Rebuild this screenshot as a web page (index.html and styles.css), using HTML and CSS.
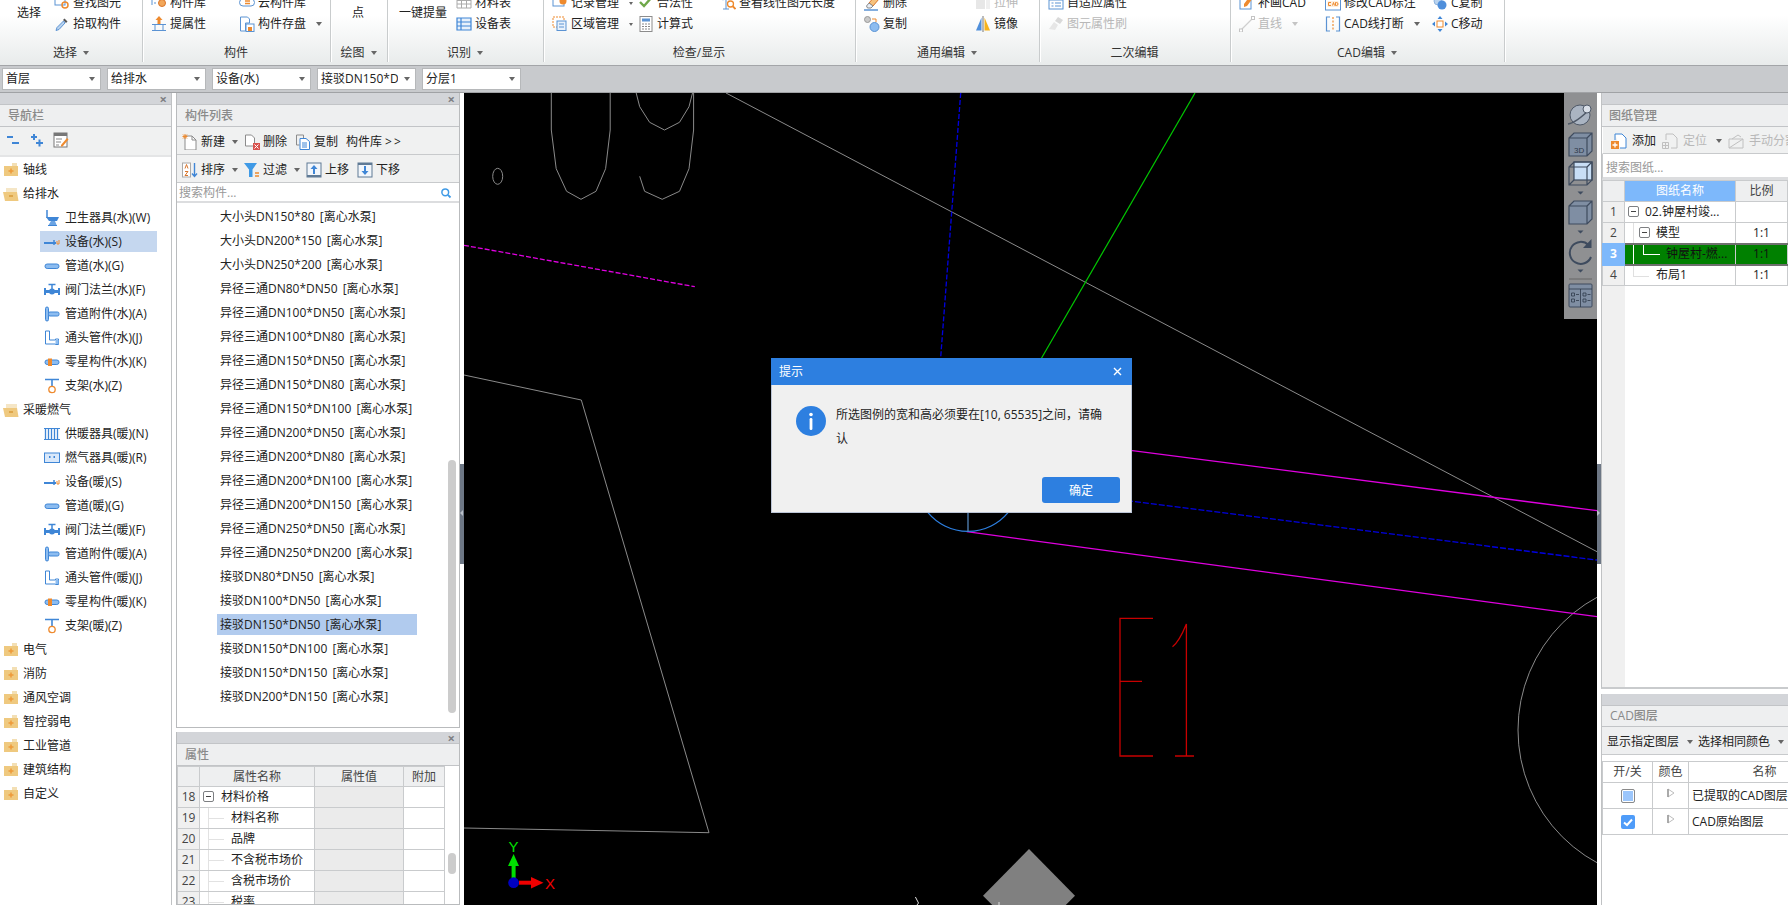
FILE: index.html
```html
<!DOCTYPE html>
<html lang="zh-CN">
<head>
<meta charset="utf-8">
<title>图纸管理</title>
<link rel="stylesheet" href="styles.css">
</head>
<body>
<svg class="defs" aria-hidden="true">
  <symbol id="t-closed" viewBox="0 0 16 16"><path d="M9 1h5v3H9z" fill="#f3dfb4"/><rect x="1" y="4" width="14" height="10" fill="#efc97f"/><path d="M8 6.5v5M5.5 9h5" stroke="#ee9a3a" stroke-width="1.5"/></symbol>
  <symbol id="t-open" viewBox="0 0 16 16"><path d="M3 2h11v11H3z" fill="#f5e6c6"/><path d="M0 6h14l1.500 9H2z" fill="#efc97f"/><path d="M6 10h4" stroke="#d99a3a" stroke-width="1.500"/></symbol>
  <symbol id="t-toilet" viewBox="0 0 16 16"><path d="M3 0v8" stroke="#3f86d6" stroke-width="1.500"/><path d="M2 7h13l-2 4H5z" fill="#3f86d6"/><path d="M4 16h9l-2-5H7z" fill="#6ba4e3"/><path d="M4 15.500h9" stroke="#3f86d6"/></symbol>
  <symbol id="t-device" viewBox="0 0 16 16"><path d="M0 9h12" stroke="#3f86d6" stroke-width="2"/><path d="M10 6v5" stroke="#3f86d6" stroke-width="1.500"/><path d="M13 7v3h2V6" stroke="#ee8a2e" fill="none"/></symbol>
  <symbol id="t-pipe" viewBox="0 0 16 16"><rect x="1" y="6" width="14" height="4.500" rx="2.200" fill="#8cbcf0" stroke="#3f86d6"/></symbol>
  <symbol id="t-valve" viewBox="0 0 16 16"><path d="M1 6v7M15 6v7" stroke="#3f86d6" stroke-width="2"/><path d="M1 9.500h14" stroke="#3f86d6" stroke-width="3"/><circle cx="8" cy="9.500" r="3" fill="#3f86d6"/><path d="M8 2v5M4.500 2.500h7" stroke="#3f86d6" stroke-width="1.500"/></symbol>
  <symbol id="t-fit" viewBox="0 0 16 16"><rect x="1.500" y="1" width="3" height="14" rx="1.500" fill="#8cbcf0" stroke="#3f86d6"/><rect x="4.500" y="6" width="10.500" height="4" rx="1.500" fill="#8cbcf0" stroke="#3f86d6"/></symbol>
  <symbol id="t-elbow" viewBox="0 0 16 16"><path d="M1.500 1h4v9h6v-1h3v5.500h-3V14h-10z" fill="#fff" stroke="#3f86d6"/><rect x="11.500" y="10" width="3" height="4" fill="#8cbcf0"/></symbol>
  <symbol id="t-misc" viewBox="0 0 16 16"><rect x="1" y="6" width="14" height="4.500" rx="2.200" fill="#8cbcf0" stroke="#3f86d6"/><rect x="4" y="4.500" width="4" height="7.500" fill="#ee8a2e"/></symbol>
  <symbol id="t-support" viewBox="0 0 16 16"><path d="M1 1.500h14M8 1.500v7" stroke="#3f86d6" stroke-width="1.600"/><circle cx="8" cy="11.500" r="3.200" fill="#fff" stroke="#ee8a2e" stroke-width="1.300"/></symbol>
  <symbol id="t-rad" viewBox="0 0 16 16"><path d="M1.500 2v12M4.500 2v12M7.500 2v12M10.500 2v12M13.500 2v12" stroke="#3f86d6" stroke-width="1.300"/><path d="M0 2.500h16M0 13.500h16" stroke="#3f86d6"/></symbol>
  <symbol id="t-gas" viewBox="0 0 16 16"><rect x=".5" y="3" width="15" height="9.500" fill="#d9e8fa" stroke="#3f86d6"/><path d="M5 6h1.500v2H5zM9.500 6H11v2H9.500z" fill="#3f86d6"/></symbol>

  <symbol id="r-find" viewBox="0 0 16 16"><rect x="1" y="1" width="10" height="9" fill="#fff" stroke="#5b93d3"/><circle cx="11" cy="10" r="3" fill="none" stroke="#ee8a2e" stroke-width="1.500"/></symbol>
  <symbol id="r-pick" viewBox="0 0 16 16"><path d="M10.500 2.500l3 3-1.500 1.500-3-3z" fill="#555"/><path d="M9.500 5L3 11.500 2 14.500l3-1L11 7z" fill="#b9d3ef" stroke="#5b93d3"/></symbol>
  <symbol id="r-lib" viewBox="0 0 16 16"><path d="M1 2v8M3 4h2M3 8h2" stroke="#5b93d3" fill="none"/><circle cx="11" cy="8" r="3.500" fill="#f2a75a" stroke="#d9752a"/></symbol>
  <symbol id="r-prop" viewBox="0 0 16 16"><path d="M8 0l3.500 4H9.500v5h-3V4H4.500z" fill="#ee8a2e"/><path d="M1 8.500h14M1 14.500h14M4 8.500v6M12 8.500v6" stroke="#5b93d3" fill="none"/></symbol>
  <symbol id="r-cloud" viewBox="0 0 16 16"><path d="M4 11a3.500 3.500 0 0 1 0-7h8a3.500 3.500 0 0 1 0 7z" fill="#fff" stroke="#5b93d3"/><path d="M6 6h5M6 8.500h5" stroke="#ee8a2e" stroke-width="1.500"/></symbol>
  <symbol id="r-save" viewBox="0 0 16 16"><path d="M1.500 1h7l2 2v4h-4v8h-5z" fill="#fff" stroke="#5b93d3"/><rect x="7" y="8" width="8" height="7.500" fill="#fff" stroke="#5b93d3"/><rect x="9" y="11" width="4" height="4" fill="#ee8a2e"/></symbol>
  <symbol id="r-mat" viewBox="0 0 16 16"><path d="M1 2h14v11H1zM1 5.500h14M1 9h14M5.500 2v11M10.500 2v11" fill="#fff" stroke="#aaa"/></symbol>
  <symbol id="r-equip" viewBox="0 0 16 16"><path d="M1 2h14v12H1zM1 6h14M1 10h14M5 2v12" fill="#e8f1fb" stroke="#3f86d6" stroke-width="1.200"/></symbol>
  <symbol id="r-rec" viewBox="0 0 16 16"><rect x="1" y="1" width="11" height="10" fill="#fff" stroke="#5b93d3"/><circle cx="11" cy="6" r="3.500" fill="#ee8a2e"/></symbol>
  <symbol id="r-area" viewBox="0 0 16 16"><rect x="1" y="1" width="11" height="10" fill="#fff" stroke="#ee8a2e" stroke-dasharray="2 1"/><rect x="5" y="5" width="9" height="9.500" fill="#e8f1fb" stroke="#5b93d3"/><path d="M7 8h5M7 11h5" stroke="#5b93d3"/></symbol>
  <symbol id="r-ok" viewBox="0 0 16 16"><path d="M2 7l4 4 8-9" fill="none" stroke="#6fa84a" stroke-width="2.400"/></symbol>
  <symbol id="r-calc" viewBox="0 0 16 16"><rect x="2" y="0.500" width="12" height="15" fill="#fff" stroke="#8c8c8c"/><rect x="4" y="2.500" width="8" height="3" fill="#5b93d3"/><path d="M4 8h2M7 8h2M10 8h2M4 10.500h2M7 10.500h2M10 10.500h2M4 13h2M7 13h2M10 13h2" stroke="#888"/></symbol>
  <symbol id="r-len" viewBox="0 0 16 16"><circle cx="3" cy="3" r="1.800" fill="none" stroke="#5b93d3"/><circle cx="9" cy="3" r="1.800" fill="none" stroke="#5b93d3"/><path d="M6 4v10M3 14h6" stroke="#5b93d3"/><circle cx="10.500" cy="9" r="3" fill="#fff" stroke="#ee8a2e" stroke-width="1.300"/><path d="M12.500 11l3 3" stroke="#ee8a2e" stroke-width="1.800"/></symbol>
  <symbol id="r-erase" viewBox="0 0 16 16"><path d="M11 1l4 3-6 7-4-3z" fill="#f5c27e" stroke="#d9752a"/><path d="M5 8l4 3-2 2H3.500L2.500 11z" fill="#e8eef6" stroke="#888"/><path d="M0 15h14" stroke="#5b93d3" stroke-width="1.500"/></symbol>
  <symbol id="r-dup" viewBox="0 0 16 16"><circle cx="3.500" cy="3.500" r="3" fill="#c9c9c9" stroke="#999"/><circle cx="10.500" cy="11" r="4.500" fill="#8cbcf0" stroke="#5b93d3"/><path d="M8 3h4v3" fill="none" stroke="#ee8a2e"/></symbol>
  <symbol id="r-stretch" viewBox="0 0 16 16"><path d="M1 14V5l5-4h4v13z" fill="#e7e7e7"/><path d="M11 4h4v10h-4z" fill="#efefef"/></symbol>
  <symbol id="r-mirror" viewBox="0 0 16 16"><path d="M6.500 1.500v13H1z" fill="#4f8fdb"/><path d="M8 0v16" stroke="#777"/><path d="M9.500 1.500v13H15z" fill="#f7b31c"/></symbol>
  <symbol id="r-adapt" viewBox="0 0 16 16"><rect x="1" y="2" width="14" height="12" fill="#fff" stroke="#5b93d3"/><path d="M1 5h14M3.500 8h2M7 8h6M3.500 11h2M7 11h6" stroke="#5b93d3"/></symbol>
  <symbol id="r-brush" viewBox="0 0 16 16"><path d="M10 1l5 3-3 4-5-3z" fill="#d9d9d9"/><path d="M6 6l4 3-3 5-6-1z" fill="#e6e6e6"/></symbol>
  <symbol id="r-fill" viewBox="0 0 16 16"><rect x="1" y="3" width="11" height="11" fill="#fff" stroke="#5b93d3"/><path d="M5 9l6-8 3 2-6 8-3 1z" fill="#ee8a2e"/></symbol>
  <symbol id="r-line" viewBox="0 0 16 16"><path d="M2 14L14 2" stroke="#cfcfcf" stroke-width="1.300"/><rect x="0.500" y="13" width="3" height="3" fill="#fff" stroke="#c4c4c4"/><rect x="12.500" y="0.500" width="3" height="3" fill="#fff" stroke="#c4c4c4"/></symbol>
  <symbol id="r-mark" viewBox="0 0 16 16"><rect x=".5" y="1" width="15" height="14" fill="#fff" stroke="#5b93d3"/><path d="M2.500 6h11v6h-11z" fill="#fdeedd"/><path d="M6 7.500H3.500v3H6M7.500 10.500l1-3 1 3M10.500 7.500v3h1a1.500 1.500 0 0 0 0-3z" fill="none" stroke="#ee8a2e"/></symbol>
  <symbol id="r-break" viewBox="0 0 16 16"><path d="M5 1H1.500v14H5M11 1h3.500v14H11" fill="none" stroke="#5b93d3" stroke-width="1.200"/><path d="M8 1v14" stroke="#ee8a2e" stroke-dasharray="2 1.500" stroke-width="1.200"/></symbol>
  <symbol id="r-ccopy" viewBox="0 0 16 16"><circle cx="6" cy="6" r="4" fill="#b9d3ef" stroke="#8fb4de"/><circle cx="10" cy="10" r="4.500" fill="#4f8fdb"/></symbol>
  <symbol id="r-move" viewBox="0 0 16 16"><path d="M8 0l2.500 3h-5zM8 16l-2.500-3h5zM0 8l3-2.500v5zM16 8l-3 2.500v-5z" fill="#3f86d6"/><rect x="5" y="5" width="6" height="6" fill="#fff" stroke="#ee8a2e"/></symbol>

  <symbol id="b-minus" viewBox="0 0 16 16"><path d="M2 5h6M7 11h7" stroke="#3f86d6" stroke-width="2"/></symbol>
  <symbol id="b-plus" viewBox="0 0 16 16"><path d="M2 5h6M5 2v6M7 11h7M10.500 7.500v7" stroke="#3f86d6" stroke-width="2"/></symbol>
  <symbol id="b-edit" viewBox="0 0 16 16"><rect x="1" y="1" width="13" height="14" fill="#fff" stroke="#777"/><rect x="1" y="1" width="13" height="3" fill="#777"/><path d="M3 7h6M3 10h5M3 13h3" stroke="#888"/><path d="M8 13l6-7 1.500 1.500-6 7H8z" fill="#ee8a2e"/></symbol>
  <symbol id="b-new" viewBox="0 0 16 16"><path d="M3 2h7l4 4v10H3z" fill="#fff" stroke="#8c8c8c"/><path d="M10 2v4h4" fill="none" stroke="#8c8c8c"/><path d="M3 0v5M.5 2.500h5M1 .5l4 4M5 .5l-4 4" stroke="#ee8a2e"/></symbol>
  <symbol id="b-del" viewBox="0 0 16 16"><path d="M1.500 1h6l3 3v8h-9z" fill="#fff" stroke="#8c8c8c"/><rect x="9" y="9" width="7" height="7" fill="#d9534f"/><path d="M10.500 10.500l4 4M14.500 10.500l-4 4" stroke="#fff"/></symbol>
  <symbol id="b-copy" viewBox="0 0 16 16"><path d="M1.500 1h7v3M1.500 1v10h3" fill="none" stroke="#8c8c8c"/><path d="M5 4.500h6l3.500 3v8H5z" fill="#fff" stroke="#3f86d6"/><path d="M7 9h5M7 11h5M7 13h5" stroke="#3f86d6"/></symbol>
  <symbol id="b-sort" viewBox="0 0 16 16"><rect x=".5" y="1" width="8" height="14" fill="#fff" stroke="#aaa"/><path d="M3 6.500l1.500-4 1.500 4M3 9.500h3l-3 4h3" fill="none" stroke="#d9752a"/><path d="M12.500 1v13M10 11.500l2.500 3 2.500-3" fill="none" stroke="#3f86d6" stroke-width="1.400"/></symbol>
  <symbol id="b-filter" viewBox="0 0 16 16"><path d="M0 1h13L8.500 7.500V15H5V7.500z" fill="#3f9ae6"/><path d="M11 11h4M11 14h4" stroke="#ee8a2e" stroke-width="1.300"/></symbol>
  <symbol id="b-up" viewBox="0 0 16 16"><rect x="1" y="1" width="14" height="14" fill="#f2f6fb" stroke="#5f7a95"/><rect x="1" y="13" width="14" height="2" fill="#5f7a95"/><path d="M8 3L4.500 7H7v5h2V7h2.500z" fill="#3f86d6"/></symbol>
  <symbol id="b-down" viewBox="0 0 16 16"><rect x="1" y="1" width="14" height="14" fill="#f2f6fb" stroke="#5f7a95"/><rect x="1" y="1" width="14" height="2" fill="#5f7a95"/><path d="M8 13l3.500-4H9V4H7v5H4.500z" fill="#3f86d6"/></symbol>
  <symbol id="b-search" viewBox="0 0 16 16"><circle cx="7" cy="7" r="4.500" fill="none" stroke="#3f9ae6" stroke-width="2"/><path d="M10.500 10.500L14 14" stroke="#3f9ae6" stroke-width="2.400"/></symbol>
  <symbol id="b-add" viewBox="0 0 16 16"><path d="M4 1h7l4 4v10h-6" fill="#fff" stroke="#3f86d6"/><path d="M4 1v6" stroke="#3f86d6"/><rect x="0" y="8" width="8" height="8" fill="#ee8a2e"/><path d="M4 9.500v5M1.500 12h5" stroke="#fff" stroke-width="1.300"/></symbol>
  <symbol id="b-loc" viewBox="0 0 16 16"><path d="M4 1h7l4 4v10h-6M4 1v6" fill="none" stroke="#c0c0c0"/><path d="M.5 9.500h6v6h-6zM3.500 9.500v6M.5 12.500h6" fill="none" stroke="#c0c0c0"/></symbol>
  <symbol id="b-split" viewBox="0 0 16 16"><path d="M1 15V6h14v9zM1 15l14-9M4 6l6-4 3 2" fill="none" stroke="#c0c0c0"/></symbol>
  <symbol id="b-tri" viewBox="0 0 8 10"><path d="M1 1l6 4-6 4z" fill="#fff" stroke="#bdbdbd"/><path d="M1 1v8" stroke="#999" stroke-width="1.500"/></symbol>
</svg>

<header class="ribbon">
  <section class="group g-select">
    <div class="gbody">
      <div class="big">选择</div>
      <div class="col">
        <div class="tool"><svg class="ic"><use href="#r-find"/></svg>查找图元</div>
        <div class="tool"><svg class="ic"><use href="#r-pick"/></svg>拾取构件</div>
      </div>
    </div>
    <div class="glabel">选择<i class="caret"></i></div>
  </section>
  <section class="group g-comp">
    <div class="gbody">
      <div class="col w88">
        <div class="tool"><svg class="ic"><use href="#r-lib"/></svg>构件库</div>
        <div class="tool"><svg class="ic"><use href="#r-prop"/></svg>提属性</div>
      </div>
      <div class="col">
        <div class="tool"><svg class="ic"><use href="#r-cloud"/></svg>云构件库</div>
        <div class="tool"><svg class="ic"><use href="#r-save"/></svg>构件存盘<i class="caret"></i></div>
      </div>
    </div>
    <div class="glabel">构件</div>
  </section>
  <section class="group g-draw">
    <div class="gbody"><div class="big">点</div></div>
    <div class="glabel">绘图<i class="caret"></i></div>
  </section>
  <section class="group g-id">
    <div class="gbody">
      <div class="big w57">一键提量</div>
      <div class="col">
        <div class="tool"><svg class="ic"><use href="#r-mat"/></svg>材料表</div>
        <div class="tool"><svg class="ic"><use href="#r-equip"/></svg>设备表</div>
      </div>
    </div>
    <div class="glabel">识别<i class="caret"></i></div>
  </section>
  <section class="group g-check">
    <div class="gbody">
      <div class="col w86">
        <div class="tool"><svg class="ic"><use href="#r-rec"/></svg>记录管理<i class="caret small"></i></div>
        <div class="tool"><svg class="ic"><use href="#r-area"/></svg>区域管理<i class="caret small"></i></div>
      </div>
      <div class="col w82">
        <div class="tool"><svg class="ic"><use href="#r-ok"/></svg>合法性</div>
        <div class="tool"><svg class="ic"><use href="#r-calc"/></svg>计算式</div>
      </div>
      <div class="col">
        <div class="tool"><svg class="ic"><use href="#r-len"/></svg>查看线性图元长度</div>
      </div>
    </div>
    <div class="glabel">检查/显示</div>
  </section>
  <section class="group g-edit">
    <div class="gbody">
      <div class="col w111">
        <div class="tool"><svg class="ic"><use href="#r-erase"/></svg>删除</div>
        <div class="tool"><svg class="ic"><use href="#r-dup"/></svg>复制</div>
      </div>
      <div class="col">
        <div class="tool off"><svg class="ic"><use href="#r-stretch"/></svg>拉伸</div>
        <div class="tool"><svg class="ic"><use href="#r-mirror"/></svg>镜像</div>
      </div>
    </div>
    <div class="glabel">通用编辑<i class="caret"></i></div>
  </section>
  <section class="group g-second">
    <div class="gbody">
      <div class="col">
        <div class="tool"><svg class="ic"><use href="#r-adapt"/></svg>自适应属性</div>
        <div class="tool off"><svg class="ic"><use href="#r-brush"/></svg>图元属性刷</div>
      </div>
    </div>
    <div class="glabel">二次编辑</div>
  </section>
  <section class="group g-cad">
    <div class="gbody">
      <div class="col w86">
        <div class="tool"><svg class="ic"><use href="#r-fill"/></svg>补画CAD</div>
        <div class="tool off"><svg class="ic"><use href="#r-line"/></svg>直线<i class="caret faint"></i></div>
      </div>
      <div class="col w107">
        <div class="tool"><svg class="ic"><use href="#r-mark"/></svg>修改CAD标注</div>
        <div class="tool"><svg class="ic"><use href="#r-break"/></svg>CAD线打断<i class="caret"></i></div>
      </div>
      <div class="col">
        <div class="tool"><svg class="ic"><use href="#r-ccopy"/></svg>C复制</div>
        <div class="tool"><svg class="ic"><use href="#r-move"/></svg>C移动</div>
      </div>
    </div>
    <div class="glabel">CAD编辑<i class="caret"></i></div>
  </section>
</header>

<div class="floorbar">
  <div class="select"><span>首层</span><i class="caret"></i></div>
  <div class="select"><span>给排水</span><i class="caret"></i></div>
  <div class="select"><span>设备(水)</span><i class="caret"></i></div>
  <div class="select"><span>接驳DN150*DN150</span><i class="caret"></i></div>
  <div class="select"><span>分层1</span><i class="caret"></i></div>
</div>

<main class="workspace">
  <aside class="panel nav">
    <div class="strip"><b class="close">×</b></div>
    <div class="title">导航栏</div>
    <div class="navtools">
      <svg class="ic"><use href="#b-minus"/></svg>
      <svg class="ic"><use href="#b-plus"/></svg>
      <svg class="ic"><use href="#b-edit"/></svg>
    </div>
    <ul class="tree">
      <li class="top"><svg class="ic"><use href="#t-closed"/></svg>轴线</li>
      <li class="top"><svg class="ic"><use href="#t-open"/></svg>给排水</li>
      <li class="sub"><svg class="ic"><use href="#t-toilet"/></svg>卫生器具(水)(W)</li>
      <li class="sub on"><svg class="ic"><use href="#t-device"/></svg>设备(水)(S)</li>
      <li class="sub"><svg class="ic"><use href="#t-pipe"/></svg>管道(水)(G)</li>
      <li class="sub"><svg class="ic"><use href="#t-valve"/></svg>阀门法兰(水)(F)</li>
      <li class="sub"><svg class="ic"><use href="#t-fit"/></svg>管道附件(水)(A)</li>
      <li class="sub"><svg class="ic"><use href="#t-elbow"/></svg>通头管件(水)(J)</li>
      <li class="sub"><svg class="ic"><use href="#t-misc"/></svg>零星构件(水)(K)</li>
      <li class="sub"><svg class="ic"><use href="#t-support"/></svg>支架(水)(Z)</li>
      <li class="top"><svg class="ic"><use href="#t-open"/></svg>采暖燃气</li>
      <li class="sub"><svg class="ic"><use href="#t-rad"/></svg>供暖器具(暖)(N)</li>
      <li class="sub"><svg class="ic"><use href="#t-gas"/></svg>燃气器具(暖)(R)</li>
      <li class="sub"><svg class="ic"><use href="#t-device"/></svg>设备(暖)(S)</li>
      <li class="sub"><svg class="ic"><use href="#t-pipe"/></svg>管道(暖)(G)</li>
      <li class="sub"><svg class="ic"><use href="#t-valve"/></svg>阀门法兰(暖)(F)</li>
      <li class="sub"><svg class="ic"><use href="#t-fit"/></svg>管道附件(暖)(A)</li>
      <li class="sub"><svg class="ic"><use href="#t-elbow"/></svg>通头管件(暖)(J)</li>
      <li class="sub"><svg class="ic"><use href="#t-misc"/></svg>零星构件(暖)(K)</li>
      <li class="sub"><svg class="ic"><use href="#t-support"/></svg>支架(暖)(Z)</li>
      <li class="top"><svg class="ic"><use href="#t-closed"/></svg>电气</li>
      <li class="top"><svg class="ic"><use href="#t-closed"/></svg>消防</li>
      <li class="top"><svg class="ic"><use href="#t-closed"/></svg>通风空调</li>
      <li class="top"><svg class="ic"><use href="#t-closed"/></svg>智控弱电</li>
      <li class="top"><svg class="ic"><use href="#t-closed"/></svg>工业管道</li>
      <li class="top"><svg class="ic"><use href="#t-closed"/></svg>建筑结构</li>
      <li class="top"><svg class="ic"><use href="#t-closed"/></svg>自定义</li>
    </ul>
  </aside>

  <div class="midcol">
    <section class="panel list-panel">
      <div class="strip"><b class="close">×</b></div>
      <div class="title">构件列表</div>
      <div class="bar">
        <span class="btn has-menu"><svg class="ic"><use href="#b-new"/></svg>新建<i class="caret"></i></span>
        <span class="btn"><svg class="ic"><use href="#b-del"/></svg>删除</span>
        <span class="btn"><svg class="ic"><use href="#b-copy"/></svg>复制</span>
        <span class="btn">构件库<span class="gt">&gt;&gt;</span></span>
      </div>
      <div class="bar">
        <span class="btn has-menu"><svg class="ic"><use href="#b-sort"/></svg>排序<i class="caret"></i></span>
        <span class="btn has-menu"><svg class="ic"><use href="#b-filter"/></svg>过滤<i class="caret"></i></span>
        <span class="btn"><svg class="ic"><use href="#b-up"/></svg>上移</span>
        <span class="btn"><svg class="ic"><use href="#b-down"/></svg>下移</span>
      </div>
      <div class="search"><span>搜索构件...</span><svg class="ic s"><use href="#b-search"/></svg></div>
      <div class="items">
        <div class="item">大小头DN150*80 [离心水泵]</div>
        <div class="item">大小头DN200*150 [离心水泵]</div>
        <div class="item">大小头DN250*200 [离心水泵]</div>
        <div class="item">异径三通DN80*DN50 [离心水泵]</div>
        <div class="item">异径三通DN100*DN50 [离心水泵]</div>
        <div class="item">异径三通DN100*DN80 [离心水泵]</div>
        <div class="item">异径三通DN150*DN50 [离心水泵]</div>
        <div class="item">异径三通DN150*DN80 [离心水泵]</div>
        <div class="item">异径三通DN150*DN100 [离心水泵]</div>
        <div class="item">异径三通DN200*DN50 [离心水泵]</div>
        <div class="item">异径三通DN200*DN80 [离心水泵]</div>
        <div class="item">异径三通DN200*DN100 [离心水泵]</div>
        <div class="item">异径三通DN200*DN150 [离心水泵]</div>
        <div class="item">异径三通DN250*DN50 [离心水泵]</div>
        <div class="item">异径三通DN250*DN200 [离心水泵]</div>
        <div class="item">接驳DN80*DN50 [离心水泵]</div>
        <div class="item">接驳DN100*DN50 [离心水泵]</div>
        <div class="item on">接驳DN150*DN50 [离心水泵]</div>
        <div class="item">接驳DN150*DN100 [离心水泵]</div>
        <div class="item">接驳DN150*DN150 [离心水泵]</div>
        <div class="item">接驳DN200*DN150 [离心水泵]</div>
        <i class="thumb list-thumb"></i>
      </div>
    </section>
    <section class="panel prop-panel">
      <div class="strip"><b class="close">×</b></div>
      <div class="title">属性</div>
      <div class="prop-body">
        <table class="grid prop">
          <colgroup><col class="c22"><col class="c115"><col class="c89"><col class="c41"></colgroup>
          <tr class="head"><th></th><th>属性名称</th><th>属性值</th><th>附加</th></tr>
          <tr><td class="num">18</td><td class="group-name"><i class="box"></i>材料价格</td><td class="val"></td><td></td></tr>
          <tr><td class="num">19</td><td class="leaf">材料名称</td><td class="val"></td><td></td></tr>
          <tr><td class="num">20</td><td class="leaf">品牌</td><td class="val"></td><td></td></tr>
          <tr><td class="num">21</td><td class="leaf">不含税市场价</td><td class="val"></td><td></td></tr>
          <tr><td class="num">22</td><td class="leaf">含税市场价</td><td class="val"></td><td></td></tr>
          <tr><td class="num">23</td><td class="leaf">税率</td><td class="val"></td><td></td></tr>
        </table>
        <i class="thumb prop-thumb"></i>
      </div>
    </section>
  </div>

  <div class="gutter"><div class="tab"><i></i></div></div>

  <div class="canvas">
    <svg class="drawing" viewBox="464 93 1133 812" fill="none">
      <g stroke="#8a8a8a" stroke-width="1">
        <path d="M551.300 93V130L556.200 168.700 566.600 191.300 581 199.300 596 191.300 605.600 168.700 610.200 130V93"/>
        <ellipse cx="497.700" cy="176.300" rx="5" ry="8"/>
        <path d="M636.200 93L639.700 106.700 649.600 122.300 664.500 130 679.500 122.300 689 106.700 692.500 93"/>
        <path d="M693.600 93V130L689 168.700 679.500 191.300 662.200 199.300 644.600 191.300 639.700 176.300"/>
        <path d="M726 93L1597 551.700"/>
        <path d="M464 375L581.300 400 709 832.700 464 828"/>
        <circle cx="1669" cy="730" r="151"/>
      </g>
      <path d="M960.700 93L940.500 360" stroke="#0000e0" stroke-width="1.300" stroke-dasharray="5 2"/>
      <path d="M1195 93L1041 359" stroke="#00c800" stroke-width="1.200"/>
      <path d="M464 245.300L694.800 286.700" stroke="#e000e0" stroke-width="1.300" stroke-dasharray="5 2"/>
      <path d="M1000 433.500L1597 510.700" stroke="#e000e0" stroke-width="1.300"/>
      <path d="M1000 484.500L1597 560" stroke="#0000e0" stroke-width="1.300" stroke-dasharray="6 2"/>
      <path d="M966.700 531.700L1597 616.700" stroke="#e000e0" stroke-width="1.300"/>
      <path d="M928 512.700A52 52 0 0 0 1008 512.700" stroke="#2d7fe0" stroke-width="1.200"/>
      <path d="M968 505V531.700" stroke="#5a8fc8" stroke-width="1.200"/>
      <g stroke="#c80000" stroke-width="1.300">
        <path d="M1153 618.300H1120V756H1153M1120 681.300H1142"/>
        <path d="M1172.500 646.700Q1179 642 1186.400 624V756M1175 756H1194"/>
      </g>
      <path d="M1029 849L1075 895.700 1029 942 983 895.700Z" fill="#808080"/>
      <path d="M999 902V905M915.400 897L918.500 903 917 905" stroke="#ddd"/>
      <path d="M513.600 878V865" stroke="#00e000" stroke-width="4"/>
      <path d="M513.600 854L519 866H508Z" fill="#00e000"/>
      <path d="M519 882.700H532" stroke="#f00000" stroke-width="4"/>
      <path d="M543.500 882.700L531 877V888.500Z" fill="#f00000"/>
      <ellipse cx="513.600" cy="882.700" rx="5.400" ry="5.400" fill="#0000c0"/>
      <text x="508.500" y="852" class="ax" fill="#00e000">Y</text>
      <text x="545" y="889" class="ax" fill="#f00000">X</text>
    </svg>
    <svg class="viewtools" viewBox="0 0 33 226" fill="none">
      <circle cx="16" cy="22" r="10" fill="#aab4c2" stroke="#4f5968"/>
      <path d="M4 31Q12 30 27 15" stroke="#4f5968" stroke-width="1.500"/>
      <circle cx="23" cy="16" r="4" fill="#d9dfe8" stroke="#4f5968"/>
      <g stroke="#3e4b5e" stroke-width="1.200">
        <path d="M5 45L10 40H28V58L23 63H5ZM5 45H23V63M23 45L28 40" fill="#7f8ea3"/>
        <rect x="10" y="69" width="18" height="18" fill="#c8def5"/>
        <path d="M5 74L10 69H28V87L23 92H5ZM5 74H23V92M23 74L28 69M5 92L10 87" />
        <path d="M5 113L10 108H28V126L23 131H5ZM5 113H23V131M23 113L28 108" fill="#7f8ea3"/>
      </g>
      <text x="10" y="60" class="d3">3D</text>
      <path d="M24.500 152A11 11 0 1 0 27 164" stroke="#3e4b5e" stroke-width="2"/>
      <path d="M27.500 146V155H19Z" fill="#3e4b5e"/>
      <path d="M13.500 98.500h6l-3 3zM13.500 137.500h6l-3 3zM13.500 176.500h6l-3 3z" fill="#3e4b5e"/>
      <path d="M5 186H28" stroke="#666"/>
      <rect x="5" y="191" width="23" height="23" rx="1" fill="#7f8ea3" stroke="#3e4b5e"/>
      <path d="M5 196H28M16.500 196V214M7.500 200h3v3h-3zM7.500 206h3v3h-3zM19 200h3v3h-3zM19 206h3v3h-3zM12 201.500h3M12 207.500h3M23.500 201.500h3M23.500 207.500h3" stroke="#2f3a4a" stroke-width=".8"/>
    </svg>
  </div>

  <div class="gutter"><div class="tab right"><i></i></div></div>

  <aside class="rightcol">
    <section class="panel sheet-panel">
      <div class="strip"></div>
      <div class="title">图纸管理</div>
      <div class="bar sbar">
        <span class="btn"><svg class="ic"><use href="#b-add"/></svg>添加</span>
        <span class="btn off"><svg class="ic"><use href="#b-loc"/></svg>定位<i class="caret"></i></span>
        <span class="btn off"><svg class="ic"><use href="#b-split"/></svg>手动分割</span>
      </div>
      <div class="search tall"><span>搜索图纸...</span></div>
      <div class="sheet-body">
        <table class="grid sheet">
          <colgroup><col class="c22"><col class="c111"><col class="c52"></colgroup>
          <tr class="head"><th></th><th class="sel">图纸名称</th><th>比例</th></tr>
          <tr><td class="num">1</td><td class="n1"><i class="box"></i>02.钟屋村竣...</td><td></td></tr>
          <tr><td class="num">2</td><td class="n2 vline"><i class="box"></i>模型</td><td class="ctr">1:1</td></tr>
          <tr class="cur"><td class="num">3</td><td class="n3 vline"><i class="elbow"></i>钟屋村-燃...</td><td class="ctr">1:1</td></tr>
          <tr><td class="num">4</td><td class="n4 endline">布局1</td><td class="ctr">1:1</td></tr>
        </table>
      </div>
    </section>
    <section class="panel layer-panel">
      <div class="strip"></div>
      <div class="title">CAD图层</div>
      <div class="bar lbar">
        <span class="btn">显示指定图层<i class="caret"></i></span>
        <span class="btn">选择相同颜色<i class="caret"></i></span>
        <span class="btn">显</span>
      </div>
      <table class="grid layer">
        <colgroup><col class="c50"><col class="c36"><col class="c152"></colgroup>
        <tr class="head"><th>开/关</th><th>颜色</th><th>名称</th></tr>
        <tr><td class="ctr"><i class="chk half"></i></td><td class="ctr"><svg class="tri"><use href="#b-tri"/></svg></td><td>已提取的CAD图层</td></tr>
        <tr><td class="ctr"><i class="chk full"><svg viewBox="0 0 14 14"><path d="M3 7.500l3 2.500 5-5.500" fill="none" stroke="#fff" stroke-width="2"/></svg></i></td><td class="ctr"><svg class="tri"><use href="#b-tri"/></svg></td><td>CAD原始图层</td></tr>
      </table>
    </section>
  </aside>

  <div class="dialog" role="dialog">
    <div class="dlg-title"><span>提示</span><svg class="x" viewBox="0 0 9 9"><path d="M1 1l7 7M8 1l-7 7" stroke="#fff" stroke-width="1.400"/></svg></div>
    <div class="dlg-body">
      <svg class="info" viewBox="0 0 30 30"><circle cx="15" cy="15" r="15" fill="#2d7fe0"/><circle cx="15" cy="8.500" r="1.800" fill="#fff"/><rect x="13.600" y="12" width="2.800" height="12" rx="1.300" fill="#fff"/></svg>
      <p>所选图例的宽和高必须要在[10, 65535]之间，请确认</p>
    </div>
    <div class="dlg-foot"><button type="button">确定</button></div>
  </div>
</main>
</body>
</html>
```

FILE: styles.css
```css
* { box-sizing: border-box; }
html, body { margin: 0; padding: 0; }
body {
  width: 1788px; height: 905px; overflow: hidden; background: #fff;
  font: 12px/1 "Open Sans", "Noto Sans CJK SC", sans-serif; color: #222;
}
ul { list-style: none; margin: 0; padding: 0; }
i { font-style: normal; display: inline-block; }
.defs { position: absolute; width: 0; height: 0; }
.ic { width: 16px; height: 16px; flex: none; }
.caret {
  width: 0; height: 0; flex: none; margin-left: 6px;
  border-left: 3.5px solid transparent; border-right: 3.5px solid transparent;
  border-top: 4px solid #666;
}
.caret.small { margin-left: 4px; border-left-width: 2.5px; border-right-width: 2.5px; border-top-width: 3px; }
.caret.faint { border-top-color: #c4c4c4; }

/* ribbon */
.ribbon {
  display: flex; height: 66px; overflow: hidden;
  background: linear-gradient(#fff 0, #fff 15px, #e8ebeb 65px);
  border-bottom: 1px solid #a3a5a8;
}
.group { position: relative; flex: none; display: flex; flex-direction: column; }
.group::after {
  content: ""; position: absolute; right: -2px; top: 0; height: 62px; width: 2px;
  background: linear-gradient(90deg, #c9cccd 50%, #fff 50%);
}
.gbody { display: flex; height: 42px; margin-top: -8px; }
.glabel { height: 20px; margin-top: 8px; padding-top: 2px; display: flex; align-items: center; justify-content: center; color: #333; }
.big { display: flex; align-items: center; margin-right: 13px; }
.big.w57 { width: 57px; margin: 0; }
.col { display: flex; flex-direction: column; flex: none; }
.w88 { width: 88px; } .w86 { width: 86px; } .w82 { width: 82px; }
.w111 { width: 111px; } .w107 { width: 107px; }
.tool { display: flex; align-items: center; gap: 3px; height: 21px; padding-top: 1px; white-space: nowrap; }
.tool .caret { margin-left: 7px; }
.tool.off { color: #b8b8b8; }
.g-select { width: 142px; } .g-select .gbody { padding-left: 17px; }
.g-comp { width: 188px; } .g-comp .gbody { padding-left: 9px; }
.g-draw { width: 57px; } .g-draw .gbody { padding-left: 22px; }
.g-id { width: 156px; } .g-id .gbody { padding-left: 12px; }
.g-check { width: 312px; } .g-check .gbody { padding-left: 9px; }
.g-edit { width: 184px; } .g-edit .gbody { padding-left: 9px; }
.g-second { width: 191px; } .g-second .gbody { padding-left: 9px; }
.g-cad { width: 274px; } .g-cad .gbody { padding-left: 9px; }

/* floor selector bar */
.floorbar {
  display: flex; align-items: center; gap: 6px; height: 27px; padding-left: 2px;
  background: #c8cacd; border-bottom: 1px solid #a0a2a5;
}
.select {
  display: flex; align-items: center; width: 99px; height: 22px; padding: 0 5px 0 3px;
  background: #fff; border: 1px solid #b6b8ba;
}
.select span { flex: 1; overflow: hidden; white-space: nowrap; line-height: 16px; }

/* workspace */
.workspace { position: relative; display: flex; height: 812px; }
.panel { background: #fff; }
.strip { height: 12px; background: #d3d5d9; display: flex; justify-content: flex-end; align-items: center; padding-right: 4px; border-bottom: 1px solid #c2c4c7; }
.close { color: #7d7f83; font-size: 13px; line-height: 12px; }
.title {
  height: 22px; padding-left: 8px; display: flex; align-items: center;
  background: #eeeff0; border-bottom: 1px solid #c2c4c7; color: #8a8a8a; font-weight: 500;
}
.nav { width: 172px; flex: none; border-right: 1px solid #c0c2c4; }
.navtools {
  height: 30px; display: flex; align-items: center; gap: 8px; padding: 0 0 2px 5px;
  background: #f0f1f1; border-bottom: 2px solid #e4e5e6;
}
.tree { padding-top: 2px; }
.tree li { display: flex; align-items: center; height: 21px; margin-bottom: 3px; white-space: nowrap; }
.tree .top { padding-left: 3px; gap: 4px; }
.tree .sub { margin-left: 40px; width: 117px; padding-left: 4px; gap: 5px; }
.tree .on { background: #c5d7ef; }

.midcol { width: 284px; flex: none; margin-left: 4px; display: flex; flex-direction: column; gap: 4px; }
.list-panel { height: 635px; border: 1px solid #b9bbbd; border-top: 0; display: flex; flex-direction: column; }
.list-panel .strip, .list-panel .title, .list-panel .bar { flex: none; }
.bar {
  display: flex; align-items: center; gap: 8px; height: 28px; padding: 2px 0 0 5px;
  background: #f0f1f1; border-bottom: 1px solid #c8cacc; white-space: nowrap;
}
.btn { display: flex; align-items: center; gap: 3px; flex: none; }
.btn .caret { margin-left: 4px; }
.btn.has-menu { margin-right: -2px; }
.btn.off { color: #b8b8b8; }
.gt { letter-spacing: 2px; }
.search {
  flex: none; height: 20px; padding: 1px 7px 0 2px; display: flex; align-items: center; justify-content: space-between;
  color: #999; background: #fff; border-bottom: 2px solid #dcdddf;
}
.search .s { width: 12px; height: 12px; }
.items { position: relative; flex: 1; padding: 3px 0 0 40px; overflow: hidden; }
.item { width: 200px; height: 21px; line-height: 21px; margin-bottom: 3px; padding-left: 3px; white-space: nowrap; word-spacing: 2px; }
.item.on { background: #b1cbee; }
.thumb { position: absolute; width: 8px; background: #ccc; border-radius: 4px; }
.list-thumb { left: 271px; top: 257px; height: 253px; }

.prop-panel { flex: 1; min-height: 0; border: 1px solid #b9bbbd; border-top: 0; overflow: hidden; }
.prop-body { position: relative; }
.prop-thumb { left: 271px; top: 87px; height: 21px; }

.grid { border-collapse: collapse; table-layout: fixed; }
.grid th, .grid td { height: 21px; padding: 0; border: 1px solid #c9cbcd; white-space: nowrap; overflow: hidden; font-weight: 400; }
.grid .head th { background: #eeeff0; color: #444; text-align: center; }
.prop .head th { height: 20px; }
.grid .num { text-align: center; background: #f0f0f0; color: #444; }
.grid .ctr { text-align: center; }
.c22 { width: 22px; } .c115 { width: 115px; } .c89 { width: 89px; } .c41 { width: 41px; }
.c111 { width: 111px; } .c52 { width: 52px; }
.c50 { width: 50px; } .c36 { width: 36px; } .c152 { width: 152px; }
.prop { width: 267px; }
.val { background: #ebebeb; }
.box {
  width: 11px; height: 11px; border: 1px solid #7d7f82; border-radius: 2px; background: #fff; position: relative; vertical-align: -1px;
}
.box::after { content: ""; position: absolute; left: 2px; top: 4px; width: 5px; height: 1px; background: #444; }
.group-name { padding-left: 3px !important; }
.group-name .box { margin-right: 7px; }
.leaf {
  padding-left: 31px !important;
  background: linear-gradient(#e2e2e2, #e2e2e2) 8px 0 / 1px 100% no-repeat,
              linear-gradient(#e2e2e2, #e2e2e2) 8px 10px / 16px 1px no-repeat;
}

.gutter { width: 4px; flex: none; padding-top: 371px; background: #fff; }
.tab { height: 100px; background: #6d7785; position: relative; }
.tab i {
  position: absolute; top: 46px; left: 0; width: 0; height: 0;
  border-top: 3.5px solid transparent; border-bottom: 3.5px solid transparent; border-right: 3px solid #b9c0c9;
}
.tab.right i { border-right: 0; border-left: 3px solid #b9c0c9; }

.canvas { position: relative; width: 1133px; flex: none; background: #000; overflow: hidden; }
.drawing { display: block; width: 1133px; height: 812px; }
.ax { font: 15px "Liberation Sans", sans-serif; }
.d3 { font: 8px "Liberation Sans", sans-serif; fill: #2f3a4a; }
.viewtools { position: absolute; right: 0; top: 0; width: 33px; height: 226px; background: #8f9092; }

.rightcol { width: 187px; flex: none; display: flex; flex-direction: column; gap: 5px; }
.sheet-panel { height: 596px; border-left: 1px solid #c0c2c4; border-bottom: 2px solid #c9cbcd; display: flex; flex-direction: column; overflow: hidden; }
.sheet-panel .title { padding-left: 7px; }
.layer-panel .title { height: 21px; }
.sbar { height: 27px; flex: none; gap: 6px; padding-left: 8px; border-left: 1px solid #fff; }
.sbar .btn { gap: 5px; }
.search.tall { height: 26px; padding: 4px 0 0 3px; border-bottom-width: 3px; border-left: 1px solid #c9cbcd; }
.sheet-body { flex: 1; background: linear-gradient(90deg, #f0f0f0 23px, #fff 23px); }
.sheet { width: 185px; }
.sheet .head .sel { background: #7db8fb; color: #fff; }
.sheet td { position: relative; }
.n1 { padding-left: 3px !important; }
.n1 .box { margin-right: 6px; }
.n2 { padding-left: 14px !important; }
.n2 .box { margin-right: 6px; }
.n3 { padding-left: 41px !important; }
.n4 { padding-left: 31px !important; }
.vline { background: linear-gradient(#e0e0e0, #e0e0e0) 8px 0 / 1px 100% no-repeat; }
.endline { background: linear-gradient(#e0e0e0, #e0e0e0) 8px 0 / 1px 11px no-repeat, linear-gradient(#e0e0e0, #e0e0e0) 8px 10px / 16px 1px no-repeat; }
.cur td { background: #008000; color: #111; border-top: 2px solid #6f6f6f; border-bottom: 2px solid #6f6f6f; }
.cur .n3 { background: linear-gradient(#fff, #fff) 8px 0 / 1px 100% no-repeat, #008000; }
.cur .num { background: #7db8fb; color: #fff; font-weight: 700; border-color: #7db8fb; }
.elbow { position: absolute; left: 18px; top: 0; width: 17px; height: 10px; border-left: 1px solid #fff; border-bottom: 1px solid #fff; }

.layer-panel { flex: 1; min-height: 0; border-left: 1px solid #c0c2c4; overflow: hidden; }
.lbar { height: 28px; margin-bottom: 6px; gap: 5px; padding-left: 5px; overflow: hidden; background: #eeeff0; }
.lbar .btn .caret { margin-left: 5px; }
.layer { width: 238px; }
.layer .head th { height: 21px; background: #fff; }
.layer td { height: 26px; }
.layer td:last-child { padding-left: 3px; }
.chk { width: 14px; height: 14px; border-radius: 2px; vertical-align: -5px; }
.chk svg { display: block; width: 14px; height: 14px; }
.chk.half { background: #9cc6fb; border: 1px solid #8a8a8a; box-shadow: inset 0 0 0 1px #fff; }
.chk.full { background: #4f9cf9; }
.tri { width: 8px; height: 10px; vertical-align: 3px; }

/* message dialog */
.dialog {
  position: absolute; left: 771px; top: 265px; width: 361px; height: 155px;
  display: flex; flex-direction: column; background: #f0f0f0; border: 1px solid #bcc5d6; border-top: 0;
}
.dlg-title {
  height: 27px; margin: 0 -1px; padding: 0 10px 0 8px; display: flex; align-items: center; justify-content: space-between;
  background: #2d7fe0; color: #fff;
}
.x { width: 9px; height: 9px; }
.dlg-body { flex: 1; display: flex; padding: 21px 22px 0 24px; gap: 10px; }
.info { width: 30px; height: 30px; flex: none; }
.dlg-body p { margin: -3px 0 0; line-height: 24px; color: #222; }
.dlg-foot { display: flex; justify-content: flex-end; padding: 0 11px 9px 0; }
.dlg-foot button {
  width: 78px; height: 26px; padding: 2px 0 0; border: 0; border-radius: 3px; background: #2d7fe0; color: #fff;
  font: inherit;
}
```
